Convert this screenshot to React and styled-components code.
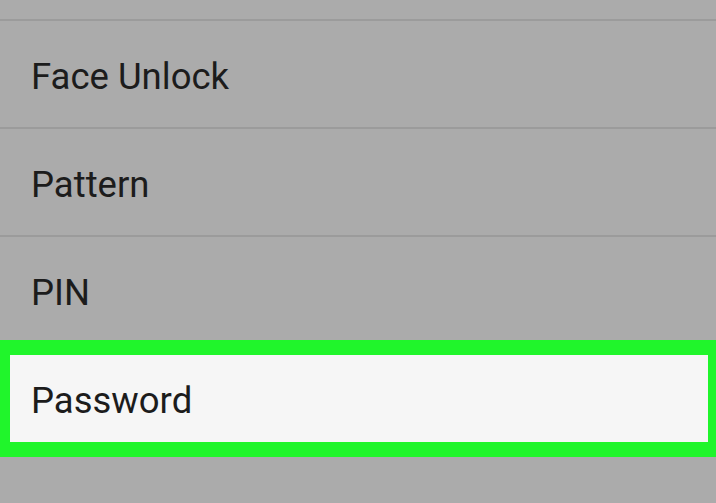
import React from "react";
import styled, { createGlobalStyle } from "styled-components";

const GlobalStyle = createGlobalStyle`
  html, body {
    margin: 0;
    padding: 0;
    background: #ababab;
    overflow: hidden;
  }
`;

const Screen = styled.div`
  width: 716px;
  height: 503px;
  background: #ababab;
  padding-top: 19px;
  box-sizing: border-box;
  display: flex;
  flex-direction: column;
  font-family: Roboto, "Liberation Sans", sans-serif;
`;

const Row = styled.div`
  height: 108px;
  box-sizing: border-box;
  border-top: 2px solid #9b9b9b;
  display: flex;
  align-items: center;
  padding-left: 31px;
  padding-top: 4px;
  font-size: 36.5px;
  color: #1c1c1c;
`;

const Highlight = styled(Row)`
  margin-top: -3px;
  height: 117px;
  border-style: solid;
  border-color: #20f52b;
  border-width: 15px 8px 15px 10px;
  background: #f6f6f6;
  padding-left: 21px;
  padding-top: 3px;
`;

const options = ["Face Unlock", "Pattern", "PIN"];

const App = () => {
  return (
    <>
      <GlobalStyle />
      <Screen>
        {options.map((label) => (
          <Row key={label}>{label}</Row>
        ))}
        <Highlight>Password</Highlight>
      </Screen>
    </>
  );
};

export default App;
